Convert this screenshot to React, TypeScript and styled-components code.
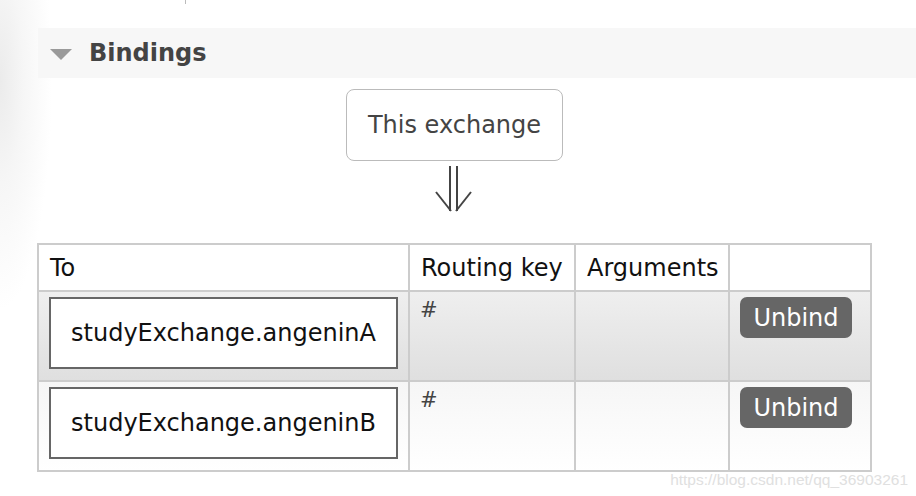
import React from "react";
import styled, { createGlobalStyle } from "styled-components";

const Global = createGlobalStyle`
  html, body {
    margin: 0;
    padding: 0;
    background: #fff;
  }
  body {
    font-family: "DejaVu Sans", Verdana, sans-serif;
    color: #222;
  }
`;

const Page = styled.div`
  position: relative;
  width: 916px;
  height: 496px;
  overflow: hidden;
  box-sizing: border-box;
  padding-left: 38px;
  background:
    radial-gradient(ellipse 52px 230px at 0 80px, #ebebeb 0%, rgba(240,240,240,0.6) 45%, rgba(255,255,255,0) 100%),
    #fff;
`;

const TopTick = styled.div`
  width: 1px;
  height: 4px;
  margin-left: 147px;
  background: #bbb;
`;

const SectionHeader = styled.div`
  margin-top: 24px;
  height: 50px;
  background: #f7f7f7;
  display: flex;
  align-items: center;
  padding-left: 12px;
  gap: 17px;
`;

const Triangle = styled.span`
  width: 0;
  height: 0;
  border-left: 11px solid transparent;
  border-right: 11px solid transparent;
  border-top: 11px solid #9a9a9a;
  margin-top: 2px;
`;

const Title = styled.h2`
  margin: 0;
  font-size: 24px;
  font-weight: bold;
  color: #444;
`;

const Diagram = styled.div`
  width: 833px;
  display: flex;
  flex-direction: column;
  align-items: center;
`;

const ExchangeBox = styled.div`
  margin-top: 11px;
  width: 217px;
  height: 72px;
  box-sizing: border-box;
  border: 1.5px solid #bbb;
  border-radius: 8px;
  display: flex;
  align-items: center;
  justify-content: center;
  font-size: 24px;
  color: #444;
`;

const ArrowSvg = styled.svg`
  display: block;
  margin-top: 5px;
`;

const Table = styled.table`
  margin-top: 30px;
  width: 833px;
  border-collapse: collapse;
  table-layout: fixed;
  border: 2px solid #ccc;
  font-size: 24px;
`;

const HeadCell = styled.th<{ $w: number }>`
  width: ${(p) => p.$w}px;
  height: 47px;
  border: 2px solid #ccc;
  text-align: left;
  font-weight: normal;
  color: #111;
  padding: 0 0 0 11px;
  box-sizing: border-box;
  white-space: nowrap;
`;

const Row = styled.tr<{ $alt?: boolean }>`
  background: ${(p) =>
    p.$alt
      ? "linear-gradient(#f6f6f6, #ffffff)"
      : "linear-gradient(#efefef, #dfdfdf)"};
`;

const Cell = styled.td`
  border: 2px solid #ccc;
  height: 90px;
  vertical-align: top;
  padding: 5px 10px;
  box-sizing: border-box;
`;

const KeyCell = styled(Cell)`
  font-size: 21px;
  color: #444;
  padding-top: 6px;
`;

const QueueBox = styled.div`
  height: 72px;
  box-sizing: border-box;
  border: 2px solid #666;
  background: #fff;
  display: flex;
  align-items: center;
  justify-content: center;
  color: #111;
  font-size: 24px;
`;

const UnbindButton = styled.button`
  font-family: inherit;
  font-size: 24px;
  color: #fff;
  background: #666;
  border: none;
  border-radius: 7px;
  width: 112px;
  height: 41px;
  padding: 0;
  display: flex;
  align-items: center;
  justify-content: center;
`;

const Watermark = styled.div`
  position: absolute;
  right: 8px;
  bottom: 7px;
  font-family: "Liberation Sans", Arial, sans-serif;
  font-size: 15.5px;
  color: #e0e0e0;
`;

const rows = ["studyExchange.angeninA", "studyExchange.angeninB"];

export default function App() {
  return (
    <>
      <Global />
      <Page>
        <TopTick />
        <SectionHeader>
          <Triangle />
          <Title>Bindings</Title>
        </SectionHeader>
        <Diagram>
          <ExchangeBox>This exchange</ExchangeBox>
          <ArrowSvg width="40" height="47" viewBox="0 0 40 47">
            <g stroke="#444" strokeWidth="2" fill="none" strokeLinecap="butt">
              <line x1="15" y1="0" x2="15" y2="45" />
              <line x1="22" y1="0" x2="22" y2="45" />
              <line x1="1" y1="26" x2="16" y2="45" />
              <line x1="36" y1="26" x2="21" y2="45" />
            </g>
          </ArrowSvg>
          <Table>
            <thead>
              <tr>
                <HeadCell $w={371}>To</HeadCell>
                <HeadCell $w={166}>Routing key</HeadCell>
                <HeadCell $w={154}>Arguments</HeadCell>
                <HeadCell $w={142}></HeadCell>
              </tr>
            </thead>
            <tbody>
              {rows.map((q, i) => (
                <Row key={q} $alt={i === 1}>
                  <Cell>
                    <QueueBox>{q}</QueueBox>
                  </Cell>
                  <KeyCell>#</KeyCell>
                  <Cell />
                  <Cell>
                    <UnbindButton>Unbind</UnbindButton>
                  </Cell>
                </Row>
              ))}
            </tbody>
          </Table>
        </Diagram>
        <Watermark>https://blog.csdn.net/qq_36903261</Watermark>
      </Page>
    </>
  );
}
